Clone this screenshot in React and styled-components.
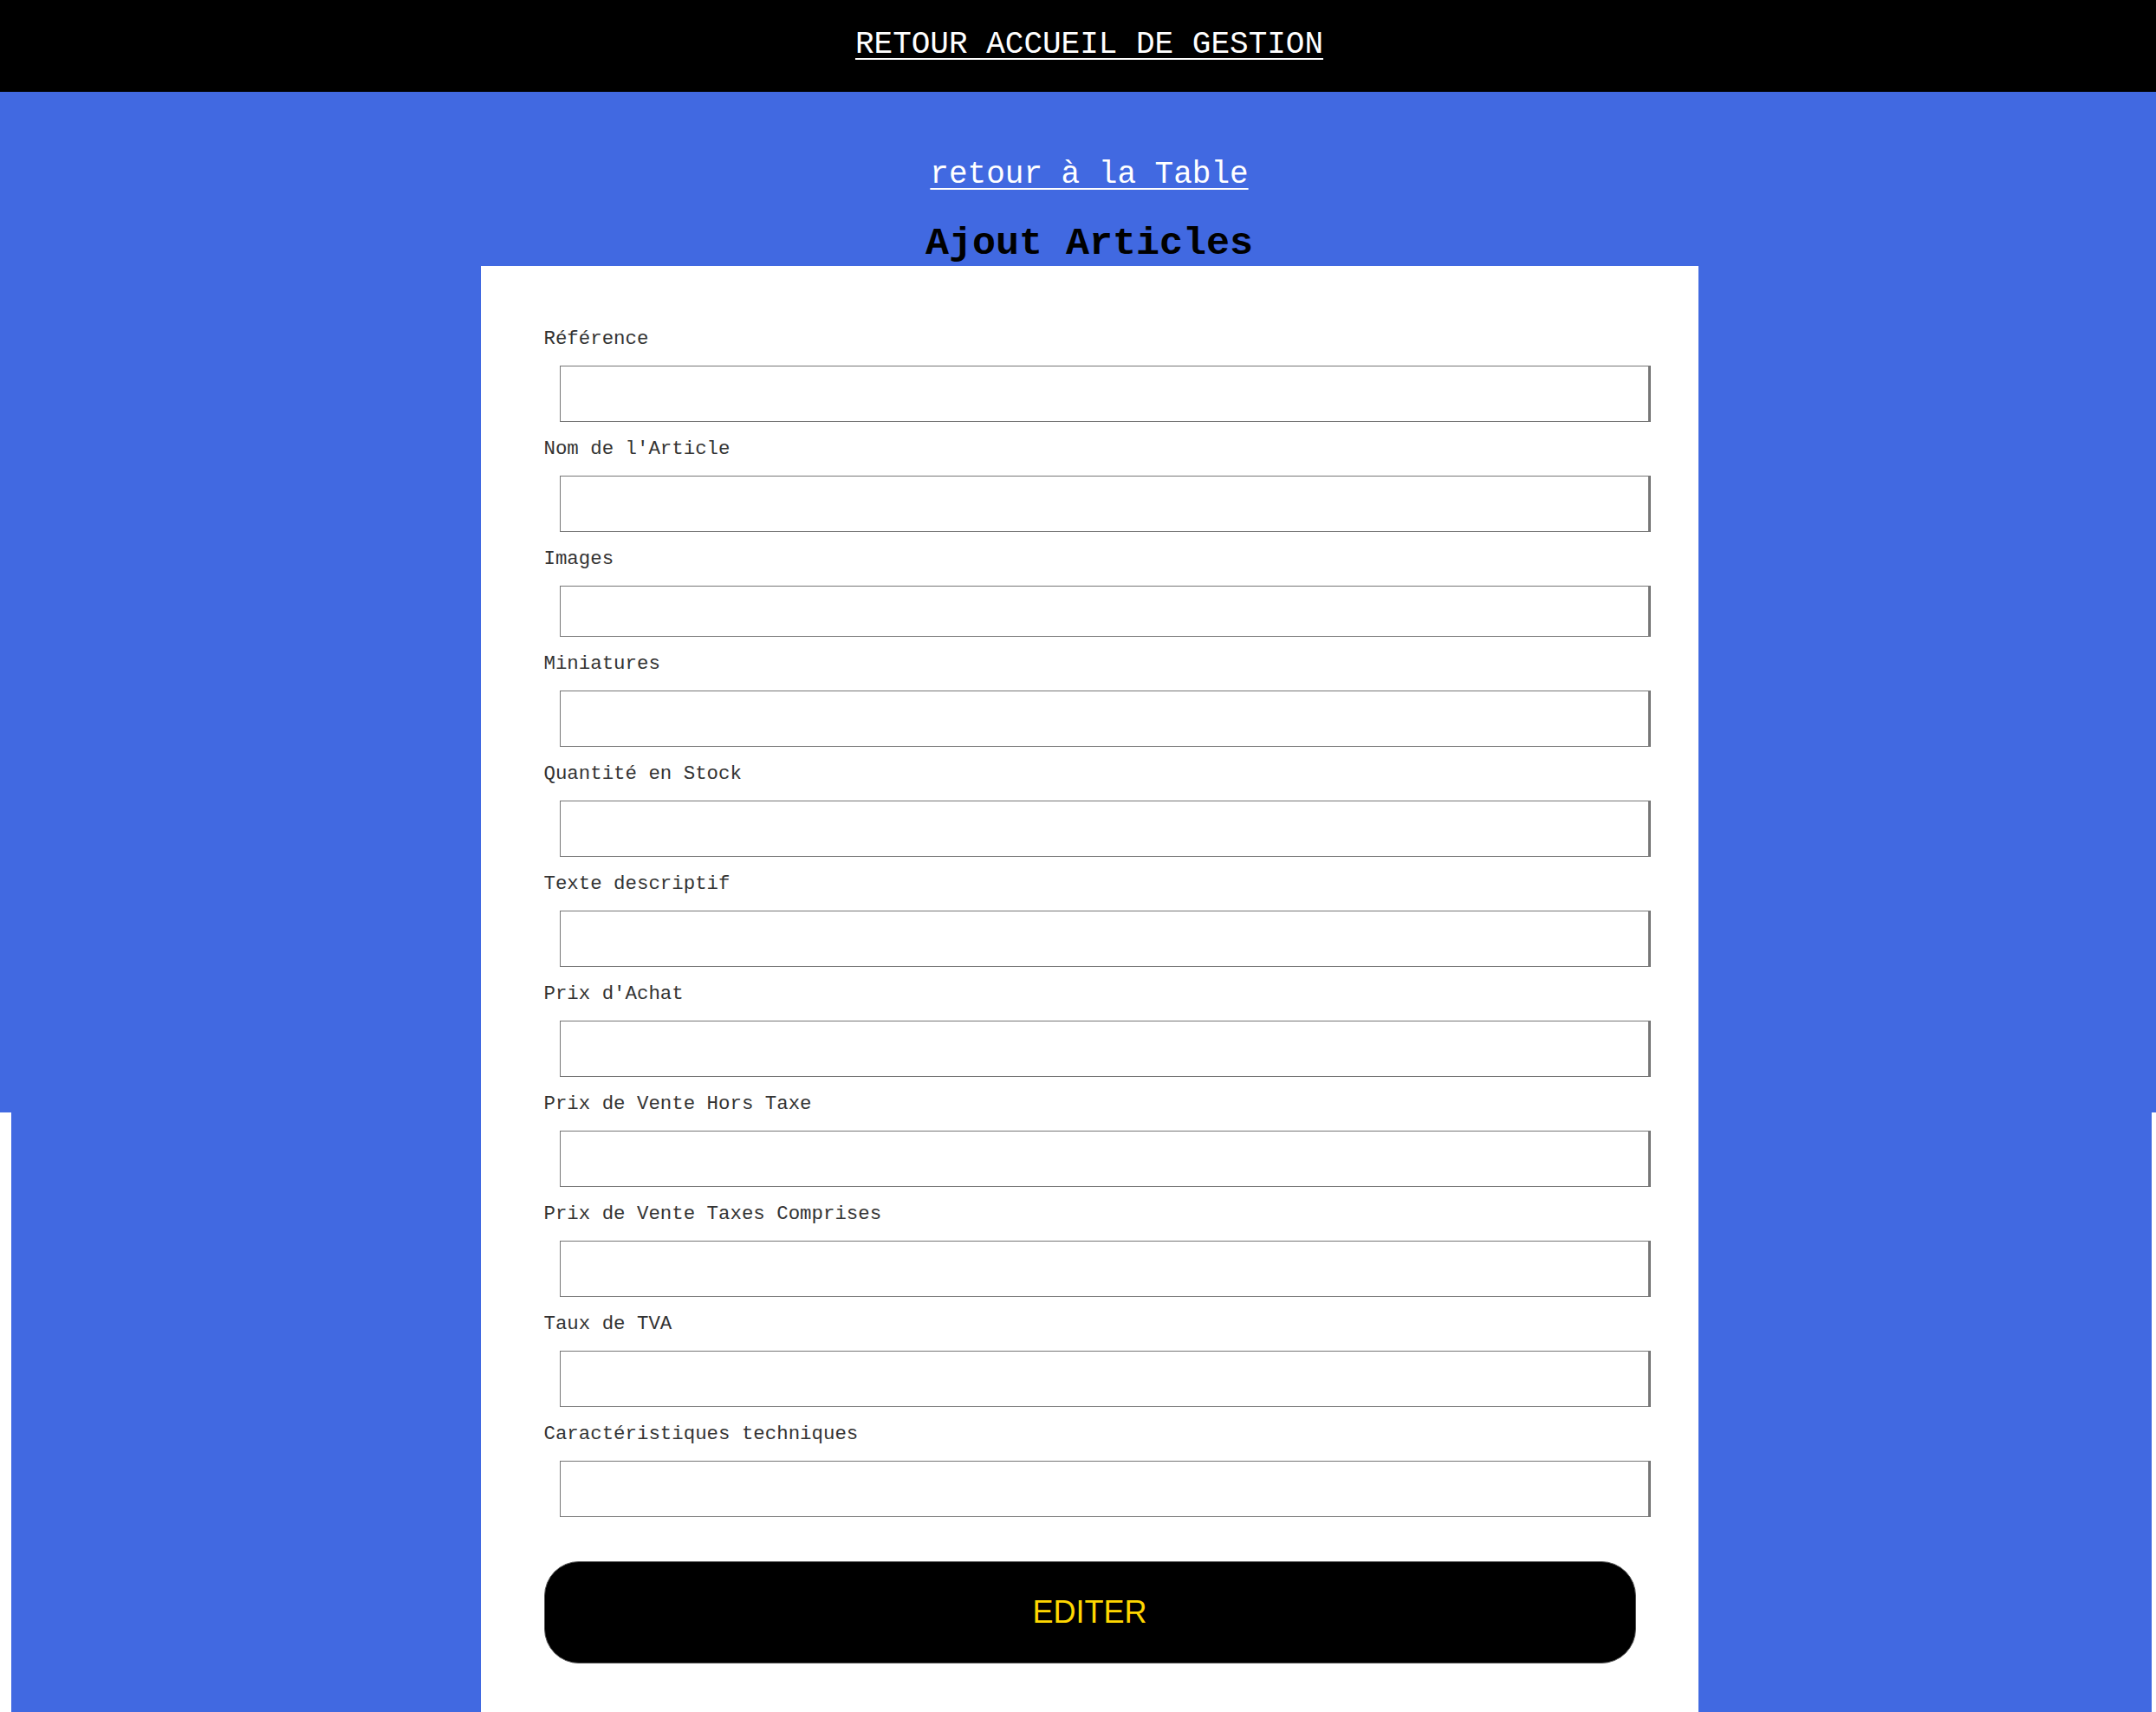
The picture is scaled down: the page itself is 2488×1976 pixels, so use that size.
import styled, { createGlobalStyle } from "styled-components";

const GlobalStyle = createGlobalStyle`
  body {
    margin: 0;
    background: #fff;
    font-family: "Liberation Mono", "Courier New", monospace;
  }
`;

const TopBar = styled.header`
  height: 106px;
  box-sizing: border-box;
  padding: 32px 0 0 26px;
  background-color: #000;
  text-align: center;
`;

const TextLink = styled.a`
  color: #fff;
  font-size: 36px;
  line-height: 40px;
  text-decoration: underline;
  text-underline-offset: 6px;
  text-decoration-thickness: 2px;
`;

/* the blue runs full width for the upper part, then sits inside small side gutters */
const Backdrop = styled.div`
  background: linear-gradient(royalblue, royalblue) top / 100% 1178px no-repeat;
`;

const Main = styled.main`
  margin: 0 5px 0 13px;
  padding: 76px 0 0 18px;
  background-color: royalblue;
  text-align: center;
`;

const BackLink = styled(TextLink)`
  display: inline-block;
  margin-bottom: 34px;
`;

const Title = styled.h1`
  margin: 0;
  font-size: 45px;
  line-height: 51px;
  font-weight: 700;
  color: #000;
`;

const Card = styled.form`
  width: 1405px;
  box-sizing: border-box;
  margin: 0 auto;
  padding: 71px 54px 56px 73px;
  background-color: #fff;
  text-align: left;
`;

const Label = styled.label`
  display: block;
  font-size: 22.4px;
  line-height: 26px;
  color: #333;
`;

const Input = styled.input`
  display: block;
  width: 1259px;
  height: ${(props) => props.$height || 65}px;
  box-sizing: border-box;
  margin: 18px 0 18px 18px;
  border: 1px solid #767676;
  border-right-width: 3px;
  background: #fff;
  font-family: inherit;
  font-size: 20px;
`;

// margin collapses with the last input's bottom margin
const SubmitButton = styled.button`
  display: block;
  width: 1260px;
  height: 118px;
  margin-top: 51px;
  border: 1px solid #555;
  border-radius: 40px;
  background-color: #000;
  color: #ffd700;
  font-family: "Liberation Sans", Arial, sans-serif;
  font-size: 36px;
  cursor: pointer;
`;

const fields = [
  { id: "reference", label: "Référence" },
  { id: "nom", label: "Nom de l'Article" },
  { id: "images", label: "Images", height: 59 },
  { id: "miniatures", label: "Miniatures" },
  { id: "quantite", label: "Quantité en Stock" },
  { id: "texte", label: "Texte descriptif" },
  { id: "prixAchat", label: "Prix d'Achat" },
  { id: "prixHT", label: "Prix de Vente Hors Taxe" },
  { id: "prixTTC", label: "Prix de Vente Taxes Comprises" },
  { id: "tva", label: "Taux de TVA" },
  { id: "caracteristiques", label: "Caractéristiques techniques" },
];

export default function App() {
  return (
    <>
      <GlobalStyle />
      <TopBar>
        <TextLink href="#">RETOUR ACCUEIL DE GESTION</TextLink>
      </TopBar>
      <Backdrop>
        <Main>
          <BackLink href="#">retour à la Table</BackLink>
          <Title>Ajout Articles</Title>
          <Card onSubmit={(e) => e.preventDefault()}>
            {fields.map((f) => (
              <div key={f.id}>
                <Label htmlFor={f.id}>{f.label}</Label>
                <Input id={f.id} name={f.id} type="text" $height={f.height} />
              </div>
            ))}
            <SubmitButton type="submit">EDITER</SubmitButton>
          </Card>
        </Main>
      </Backdrop>
    </>
  );
}
